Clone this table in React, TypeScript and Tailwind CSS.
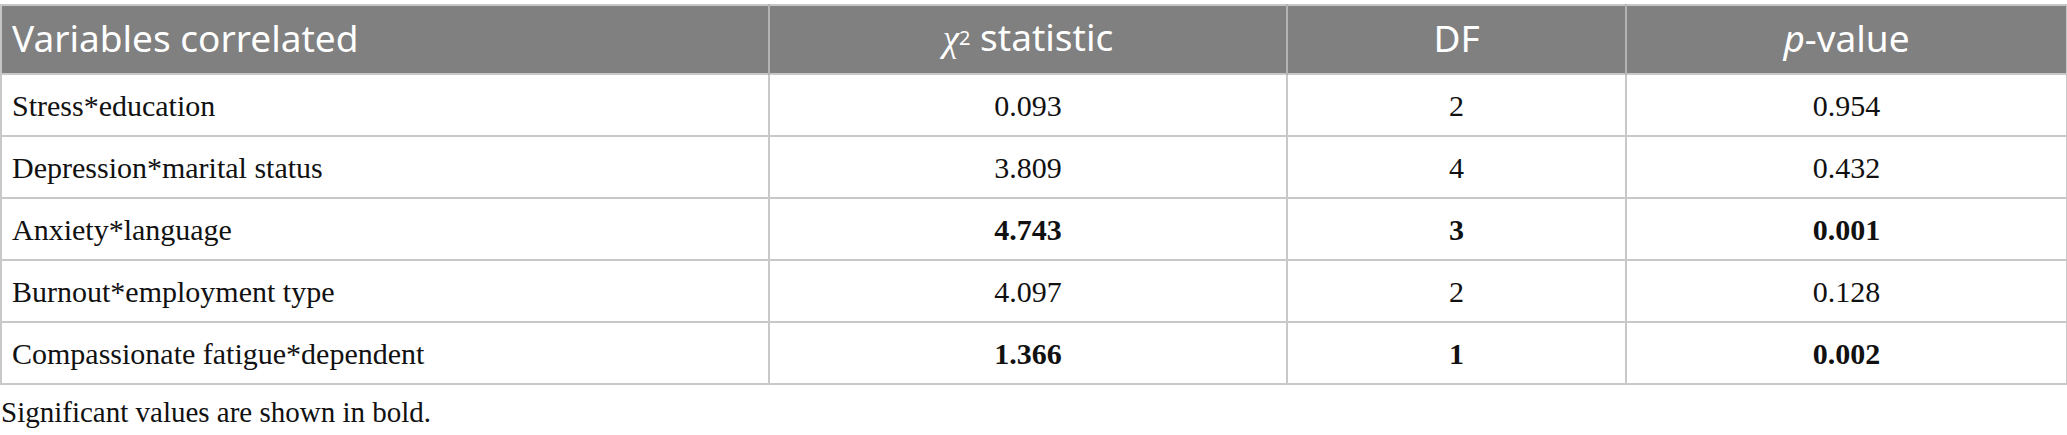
const rows = [
  { name: 'Stress*education', chi: '0.093', df: '2', p: '0.954', sig: false },
  { name: 'Depression*marital status', chi: '3.809', df: '4', p: '0.432', sig: false },
  { name: 'Anxiety*language', chi: '4.743', df: '3', p: '0.001', sig: true },
  { name: 'Burnout*employment type', chi: '4.097', df: '2', p: '0.128', sig: false },
  { name: 'Compassionate fatigue*dependent', chi: '1.366', df: '1', p: '0.002', sig: true },
];

export default function App() {
  return (
    <div className="w-[2067px] h-[435px] bg-white pt-[4px]">
      <table className="w-[2066px] table-fixed border-collapse">
        <colgroup>
          <col className="w-[768px]" />
          <col className="w-[518px]" />
          <col className="w-[339px]" />
          <col className="w-[441px]" />
        </colgroup>
        <thead>
          <tr className="h-[69px] bg-[#7f807f] text-white font-['Noto_Sans',sans-serif] text-[37px]">
            <th className="border-2 border-[#c6c6c6] border-b-0 border-r-[#b3b3b3] text-left font-normal pl-[10px] pb-[4px]">
              Variables correlated
            </th>
            <th className="border-2 border-[#c6c6c6] border-b-0 border-x-[#b3b3b3] text-center font-normal pb-[4px]">
              <span className="italic font-['Liberation_Serif',serif]">χ</span>
              <sup className="text-[20px] relative -top-[6px]">2</sup> statistic
            </th>
            <th className="border-2 border-[#c6c6c6] border-b-0 border-x-[#b3b3b3] text-center font-normal pb-[4px]">DF</th>
            <th className="border-2 border-[#c6c6c6] border-b-0 border-l-[#b3b3b3] text-center font-normal pb-[4px]">
              <span className="italic">p</span>-value
            </th>
          </tr>
        </thead>
        <tbody className="font-['Liberation_Serif',serif] text-[30px] text-[#111]">
          {rows.map((r) => (
            <tr key={r.name} className="h-[62px]">
              <td className="border-2 border-[#c8c8c8] pl-[10px] pt-[1px]">{r.name}</td>
              <td className={`border-2 border-[#c8c8c8] text-center pt-[1px] ${r.sig ? 'font-bold' : ''}`}>{r.chi}</td>
              <td className={`border-2 border-[#c8c8c8] text-center pt-[1px] ${r.sig ? 'font-bold' : ''}`}>{r.df}</td>
              <td className={`border-2 border-[#c8c8c8] text-center pt-[1px] ${r.sig ? 'font-bold' : ''}`}>{r.p}</td>
            </tr>
          ))}
        </tbody>
      </table>
      <p className="mt-[6px] pl-[1px] font-['Liberation_Serif',serif] text-[29px] text-[#111]">
        Significant values are shown in bold.
      </p>
    </div>
  );
}
